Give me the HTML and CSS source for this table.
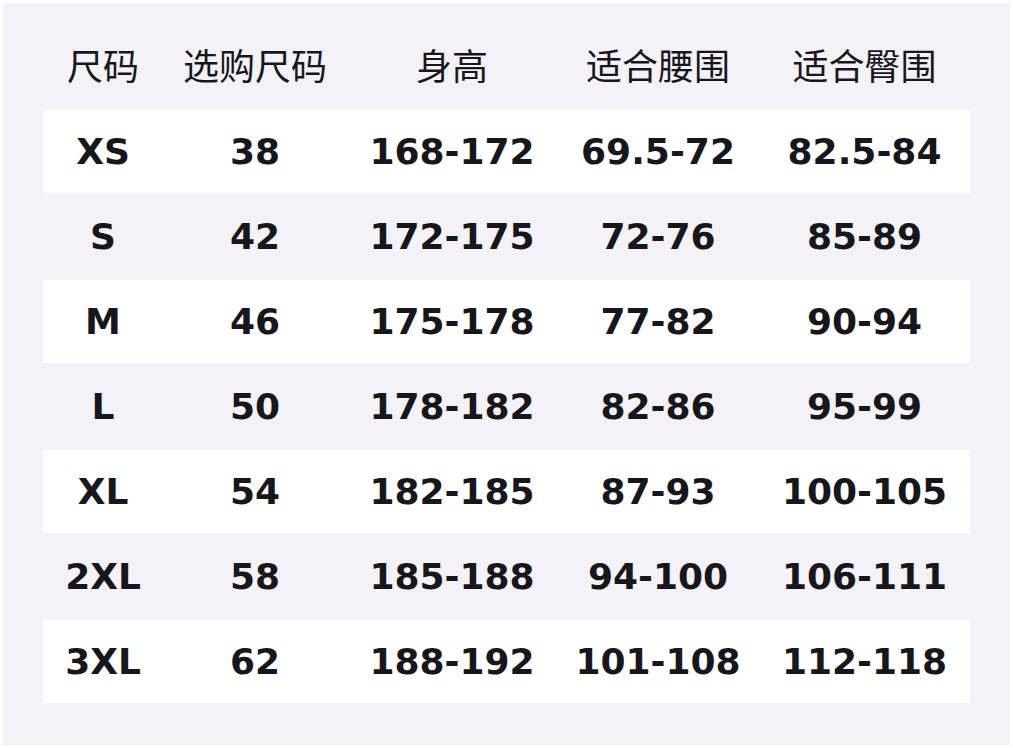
FILE: index.html
```html
<!DOCTYPE html>
<html lang="zh">
<head>
<meta charset="utf-8">
<title>尺码表</title>
<link rel="stylesheet" href="styles.css">
</head>
<body>
<div class="panel">
  <div class="table">
    <div class="row head">
      <div class="cell">尺码</div>
      <div class="cell">选购尺码</div>
      <div class="cell">身高</div>
      <div class="cell">适合腰围</div>
      <div class="cell">适合臀围</div>
    </div>
    <div class="row odd">
      <div class="cell">XS</div><div class="cell">38</div><div class="cell">168-172</div><div class="cell">69.5-72</div><div class="cell">82.5-84</div>
    </div>
    <div class="row even">
      <div class="cell">S</div><div class="cell">42</div><div class="cell">172-175</div><div class="cell">72-76</div><div class="cell">85-89</div>
    </div>
    <div class="row odd">
      <div class="cell">M</div><div class="cell">46</div><div class="cell">175-178</div><div class="cell">77-82</div><div class="cell">90-94</div>
    </div>
    <div class="row even">
      <div class="cell">L</div><div class="cell">50</div><div class="cell">178-182</div><div class="cell">82-86</div><div class="cell">95-99</div>
    </div>
    <div class="row odd">
      <div class="cell">XL</div><div class="cell">54</div><div class="cell">182-185</div><div class="cell">87-93</div><div class="cell">100-105</div>
    </div>
    <div class="row even">
      <div class="cell">2XL</div><div class="cell">58</div><div class="cell">185-188</div><div class="cell">94-100</div><div class="cell">106-111</div>
    </div>
    <div class="row odd">
      <div class="cell">3XL</div><div class="cell">62</div><div class="cell">188-192</div><div class="cell">101-108</div><div class="cell">112-118</div>
    </div>
  </div>
</div>
</body>
</html>
```
FILE: styles.css
```css
html, body {
  margin: 0;
  padding: 0;
  background: #ffffff;
}
body {
  width: 1013px;
  height: 748px;
  overflow: hidden;
}
.panel {
  margin: 3px;
  width: 1007px;
  height: 742px;
  box-sizing: border-box;
  background: #f3f2f8;
  padding: 21px 40px 0 40px;
}
.table {
  display: flex;
  flex-direction: column;
  width: 927px;
}
.row {
  display: grid;
  grid-template-columns: 120px 184px 210px 202px 211px;
  align-items: center;
  box-sizing: border-box;
  color: #16161b;
  font-family: "DejaVu Sans", "Noto Sans CJK SC", sans-serif;
  font-weight: bold;
  font-size: 36px;
  line-height: 42px;
}
.cell {
  text-align: center;
  white-space: nowrap;
}
.head {
  height: 86px;
  padding-bottom: 6px;
  font-family: "Noto Sans CJK SC", sans-serif;
  font-weight: normal;
  font-size: 36px;
}
.odd {
  height: 83px;
  background: #ffffff;
}
.even {
  height: 87px;
}
```
